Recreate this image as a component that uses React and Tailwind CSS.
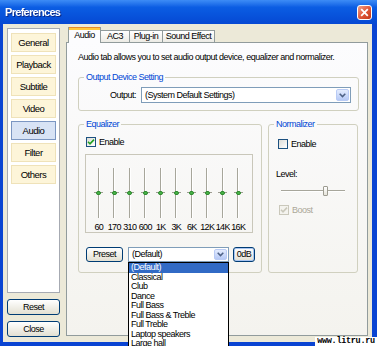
import { useState } from "react"

const sections = ["General", "Playback", "Subtitle", "Video", "Audio", "Filter", "Others"]
const bands = ["60", "170", "310", "600", "1K", "3K", "6K", "12K", "14K", "16K"]
const presets = ["(Default)", "Classical", "Club", "Dance", "Full Bass", "Full Bass & Treble", "Full Treble", "Laptop speakers", "Large hall", "Live"]
const tabs = [
  { name: "Audio", w: "w-[33px]" },
  { name: "AC3", w: "w-[30px]" },
  { name: "Plug-in", w: "w-[34px]" },
  { name: "Sound Effect", w: "w-[53px]" },
]

function XpButton({ children, className = "" }) {
  return <button className={"flex items-center justify-center rounded-[3px] border border-[#003c74] bg-gradient-to-b from-white to-[#e3e0d2] text-black leading-none " + className}>
    {children}
  </button>
}

function CheckBox({ checked = false, disabled = false }) {
  return <span className={"w-[10px] h-[10px] flex items-center justify-center border " + (disabled ? "border-[#cac8bb] bg-[#f4f3ee]" : "border-[#1c5180] bg-gradient-to-br from-[#dcdcd7] to-white")}>
    {checked && <svg width="8" height="8" viewBox="0 0 8 8">
      <path d="M1 3.8 L3 5.8 L7 1.6" fill="none" stroke={disabled ? "#cac8bb" : "#21a121"} strokeWidth="1.6" />
    </svg>}
  </span>
}

function DropArrow() {
  return <span className="w-[13px] h-full flex items-center justify-center rounded-[2px] border border-[#b9cbf5] bg-gradient-to-b from-[#e4ecfe] to-[#b6c9f6]">
    <svg width="7" height="5" viewBox="0 0 7 5">
      <path d="M0.7 0.8 L3.5 3.6 L6.3 0.8" fill="none" stroke="#4d6185" strokeWidth="1.5" />
    </svg>
  </span>
}

function EqSlider({ label }) {
  return <div className="w-[15.5px] flex flex-col items-center">
    <div className="relative mt-[13px] h-[50px] w-[9px] flex justify-center">
      <div className="w-[2px] h-full border-l border-[#a7a69b] bg-white" />
      <div className="absolute left-0 top-[22px] w-[9px] h-[5px] flex items-center justify-center">
        <div className="absolute w-[9px] h-px bg-[#9d9c91]" />
        <div className="relative w-[5px] h-[4px] rounded-[2px] bg-[#48b248] border border-[#2e8a2e]" />
      </div>
    </div>
    <div className="mt-[5px] w-[15px] overflow-hidden whitespace-nowrap text-center leading-[8px] tracking-[-0.7px]">{label}</div>
  </div>
}

export default function App() {
  const [active] = useState("Audio")

  return <div className="w-[377px] h-[346px] relative overflow-hidden bg-[#0a44d2] font-['Liberation_Sans',Arial,sans-serif] text-[9px] tracking-[-0.5px] text-black leading-none">
    <div className="h-[24px] flex items-center justify-between pl-[5px] pr-[5px] bg-gradient-to-b from-[#3d8cf6] via-[#0b5de3] via-30% to-[#0648d3]">
      <span className="text-white font-bold text-[11px] tracking-[-0.7px] drop-shadow-[1px_1px_0_#0a2a8a]">Preferences</span>
      <span className="w-[15px] h-[15px] flex items-center justify-center rounded-[3px] border border-white bg-gradient-to-br from-[#f0a08a] via-[#e0583a] to-[#c33513]">
        <svg width="9" height="9" viewBox="0 0 9 9">
          <path d="M1.2 1.2 L7.8 7.8 M7.8 1.2 L1.2 7.8" stroke="white" strokeWidth="1.8" />
        </svg>
      </span>
    </div>

    <div className="ml-[3px] mr-[5px] h-[318px] bg-[#ece9d8] flex pt-[3px] pl-[4px]">
      <div className="w-[53px] flex flex-col">
        <div className="mt-px h-[265px] bg-white border border-[#a6aab2] flex flex-col items-center pt-[4px] gap-[3px]">
          {sections.map((s) => <div
            key={s}
            className={"w-[45px] h-[19px] flex items-center justify-center border text-[9.5px] " + (s === active ? "bg-[#d8e3f5] border-[#7b96c2]" : "bg-[#fdf5d9] border-[#efe2b9]")}
          >{s}</div>)}
        </div>
        <XpButton className="mt-[6px] h-[16px] w-[53px]">Reset</XpButton>
        <XpButton className="mt-[6px] h-[16px] w-[53px]">Close</XpButton>
      </div>

      <div className="ml-[6px] w-[302px] flex flex-col">
        <div className="h-[15px] flex items-end pl-[2px]">
          {tabs.map((t) => t.name === active
            ? <div key={t.name} className={t.w + " relative z-10 -mb-px h-[16px] flex flex-col border-x border-[#919b9c] bg-[#fcfcfe]"}>
                <div className="h-px bg-[#e68b2c]" />
                <div className="h-[2px] bg-[#ffc83c]" />
                <div className="flex-1 flex items-center justify-center pb-[2px]">{t.name}</div>
              </div>
            : <div key={t.name} className={t.w + " -ml-px h-[12px] flex items-center justify-center whitespace-nowrap border border-b-0 border-[#919b9c] bg-gradient-to-b from-white to-[#ecebe5]"}>{t.name}</div>
          )}
        </div>
        <div className="h-[294px] border border-[#919b9c] bg-gradient-to-b from-[#fcfcfe] to-[#f4f3ee] pl-[11px] pt-[9px]">
          <p className="leading-[10px] whitespace-nowrap">Audio tab allows you to set audio output device, equalizer and normalizer.</p>

          <fieldset className="mt-[10px] w-[281px] h-[39px] border border-[#d0d0bf] rounded-[3px]">
            <legend className="ml-[5px] px-[2px] text-[#0046d5] leading-[10px]">Output Device Setting</legend>
            <div className="pt-[5px] pl-[31px] flex items-center">
              <span className="w-[25px]">Output:</span>
              <div className="ml-[6px] w-[210px] h-[16px] flex items-center bg-white border border-[#7f9db9] p-px">
                <span className="flex-1 pl-[2px] truncate">(System Default Settings)</span>
                <DropArrow />
              </div>
            </div>
          </fieldset>

          <div className="mt-[8px] flex">
            <fieldset className="w-[184px] h-[154px] border border-[#d0d0bf] rounded-[3px]">
              <legend className="ml-[5px] px-[2px] text-[#0046d5] leading-[10px]">Equalizer</legend>
              <div className="mt-[8px] pl-[7px] flex items-center gap-[3px]">
                <CheckBox checked />
                <span>Enable</span>
              </div>
              <div className="mt-[7px] ml-[6px] w-[168px] h-[79px] border border-[#c9c7ba] flex pl-[5px]">
                {bands.map((b) => <EqSlider key={b} label={b} />)}
              </div>
              <div className="mt-[14px] pl-[7px] flex items-center">
                <XpButton className="w-[37px] h-[15px]">Preset</XpButton>
                <div className="relative ml-[5px] w-[101px] h-[15px] flex items-center bg-white border border-[#7f9db9] p-px">
                  <span className="flex-1 pl-[2px] truncate">(Default)</span>
                  <DropArrow />
                  <div className="absolute left-[-1px] top-[14px] w-[101px] h-[90px] bg-white border border-black z-20 leading-[9.5px]">
                    {presets.map((p, i) => <div
                      key={p}
                      className={"h-[9.5px] pl-[2px] whitespace-nowrap " + (i === 0 ? "bg-[#316ac5] text-white" : "")}
                    >{p}</div>)}
                  </div>
                </div>
                <XpButton className="ml-[4px] w-[22px] h-[15px] shadow-[inset_0_0_0_1px_#a8c4f0]">0dB</XpButton>
              </div>
            </fieldset>

            <fieldset className="ml-[6px] w-[90px] h-[154px] border border-[#d0d0bf] rounded-[3px]">
              <legend className="ml-[5px] px-[2px] text-[#0046d5] leading-[10px]">Normalizer</legend>
              <div className="mt-[10px] pl-[9px] flex items-center gap-[3px]">
                <CheckBox />
                <span>Enable</span>
              </div>
              <div className="mt-[20px] pl-[7px] leading-[10px]">Level:</div>
              <div className="mt-[7px] ml-[12px] w-[64px] h-[10px] relative flex items-center">
                <div className="w-full h-[2px] border-t border-[#a7a69b] bg-white" />
                <div className="absolute left-[42px] top-0 w-[5px] h-[10px] rounded-[1px] border border-[#9d9c91] bg-gradient-to-b from-white to-[#e6e4da]" />
              </div>
              <div className="mt-[9px] pl-[10px] flex items-center gap-[3px] text-[#aca899]">
                <CheckBox checked disabled />
                <span>Boost</span>
              </div>
            </fieldset>
          </div>
        </div>
      </div>
    </div>

    <div className="absolute right-0 bottom-0 w-[62px] h-[9px] bg-white flex items-center justify-center font-['Liberation_Mono',monospace] font-bold text-[8.5px] leading-[9px] tracking-[-0.3px]">www.litru.ru</div>
  </div>
}
